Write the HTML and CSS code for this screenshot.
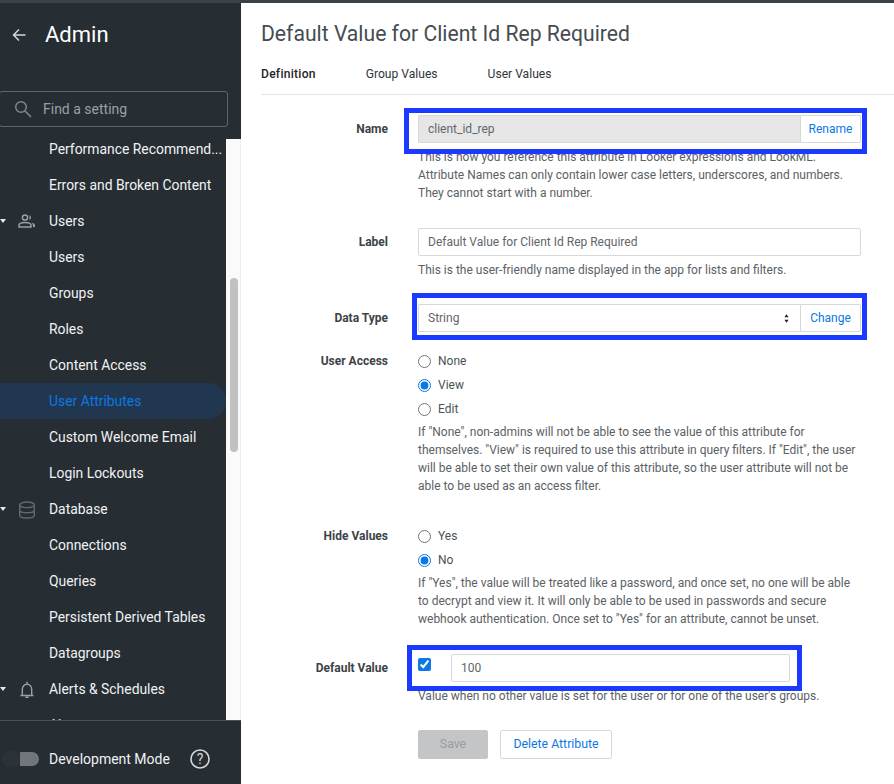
FILE: index.html
```html
<!DOCTYPE html>
<html lang="en">
<head>
<meta charset="utf-8">
<title>Default Value for Client Id Rep Required</title>
<link rel="stylesheet" href="styles.css">
</head>
<body>
<div class="topline"></div>
<div class="app">
  <aside class="sidebar">
    <header class="side-head">
      <svg class="back" viewBox="0 0 16 16" width="16" height="16"><path d="M14.5 8H2.5M8 2.5 2.5 8 8 13.5" fill="none" stroke="#d6d8da" stroke-width="1.5"/></svg>
      <span class="side-title">Admin</span>
    </header>
    <div class="search">
      <svg viewBox="0 0 18 18" width="18" height="18"><circle cx="7" cy="7" r="5.3" fill="none" stroke="#80868b" stroke-width="1.5"/><path d="M11 11l6 6" stroke="#80868b" stroke-width="1.6"/></svg>
      <span>Find a setting</span>
    </div>
    <div class="side-body">
      <nav class="nav">
        <div class="nav-list">
          <a class="item">Performance Recommend...</a>
          <a class="item">Errors and Broken Content</a>
          <a class="item group"><i class="caret"></i>
            <svg class="gicon" viewBox="0 0 18 16" width="18" height="16"><circle cx="7" cy="4.5" r="2.6" fill="none" stroke="#9aa0a6" stroke-width="1.5"/><path d="M1 14v-1.5C1 10.5 4 9.500 7 9.500s6 1 6 3V14z" fill="none" stroke="#9aa0a6" stroke-width="1.5"/><path d="M11.500 1.900a3 3 0 0 1 0 5.200zM14 9.800c2 .5 3 1.500 3 2.700V14h-2c0-1.700-.3-3-1-4.200z" fill="#9aa0a6"/></svg>
            Users</a>
          <a class="item">Users</a>
          <a class="item">Groups</a>
          <a class="item">Roles</a>
          <a class="item">Content Access</a>
          <a class="item active">User Attributes</a>
          <a class="item">Custom Welcome Email</a>
          <a class="item">Login Lockouts</a>
          <a class="item group"><i class="caret"></i>
            <svg class="gicon" viewBox="0 0 18 18" width="18" height="18"><g fill="none" stroke="#5f6b73" stroke-width="1.400"><ellipse cx="9" cy="3.800" rx="7.300" ry="2.800"/><path d="M1.700 3.800v10.400c0 1.600 3.300 2.800 7.300 2.800s7.300-1.200 7.300-2.800V3.800M1.700 9c0 1.600 3.300 2.800 7.300 2.800s7.300-1.200 7.300-2.800"/></g></svg>
            Database</a>
          <a class="item">Connections</a>
          <a class="item">Queries</a>
          <a class="item">Persistent Derived Tables</a>
          <a class="item">Datagroups</a>
          <a class="item group"><i class="caret"></i>
            <svg class="gicon" viewBox="0 0 18 18" width="18" height="18"><path d="M2.500 14.500h13M4.300 14.500V8.500C4.300 5.600 6.200 3.300 9 3.300s4.700 2.300 4.700 5.200v6" fill="none" stroke="#9aa0a6" stroke-width="1.400"/><path d="M9 .8v2M7.300 16.300h3.400" stroke="#9aa0a6" stroke-width="1.500"/></svg>
            Alerts &amp; Schedules</a>
          <a class="item">Alerts</a>
        </div>
      </nav>
      <div class="track"><div class="thumb"></div></div>
    </div>
    <footer class="side-foot">
      <span class="toggle"><i class="knob"></i><i class="rail"></i></span>
      <span class="dev">Development Mode</span>
      <svg class="help" viewBox="0 0 20 20" width="20" height="20"><circle cx="10" cy="10" r="9" fill="none" stroke="#d6d8da" stroke-width="1.600"/><text x="10" y="14.600" text-anchor="middle" class="help-q">?</text></svg>
    </footer>
  </aside>

  <main class="main">
    <h1 class="title">Default Value for Client Id Rep Required</h1>
    <div class="tabs">
      <span class="tab current">Definition</span>
      <span class="tab">Group Values</span>
      <span class="tab">User Values</span>
    </div>
    <form class="form">
      <div class="row row-name">
        <label class="lbl lbl-input">Name</label>
        <div class="field">
          <div class="joined">
            <input class="ctl ctl-disabled" value="client_id_rep" readonly>
            <button type="button" class="addon addon-rename">Rename</button>
          </div>
          <p class="help-text help-name">This is how you reference this attribute in Looker expressions and LookML.<br>Attribute Names can only contain lower case letters, underscores, and numbers.<br>They cannot start with a number.</p>
          <span class="mark mark-name"></span>
        </div>
      </div>
      <div class="row row-label">
        <label class="lbl lbl-input">Label</label>
        <div class="field">
          <input class="ctl ctl-full" value="Default Value for Client Id Rep Required" readonly>
          <p class="help-text">This is the user-friendly name displayed in the app for lists and filters.</p>
        </div>
      </div>
      <div class="row row-type">
        <label class="lbl lbl-input">Data Type</label>
        <div class="field">
          <div class="joined">
            <div class="ctl ctl-select">String
              <svg class="updown" viewBox="0 0 6 10" width="5" height="9"><path d="M3 0 5.500 3.600H.5zM3 10 .5 6.400h5z" fill="#222"/></svg>
            </div>
            <button type="button" class="addon addon-change">Change</button>
          </div>
          <span class="mark mark-type"></span>
        </div>
      </div>
      <div class="row row-access">
        <label class="lbl">User Access</label>
        <div class="field field-opts">
          <label class="opt"><input type="radio" name="access"><span>None</span></label>
          <label class="opt"><input type="radio" name="access" checked><span>View</span></label>
          <label class="opt"><input type="radio" name="access"><span>Edit</span></label>
          <p class="help-text help-opts">If "None", non-admins will not be able to see the value of this attribute for<br>themselves. "View" is required to use this attribute in query filters. If "Edit", the user<br>will be able to set their own value of this attribute, so the user attribute will not be<br>able to be used as an access filter.</p>
        </div>
      </div>
      <div class="row row-hide">
        <label class="lbl">Hide Values</label>
        <div class="field field-opts">
          <label class="opt"><input type="radio" name="hide"><span>Yes</span></label>
          <label class="opt"><input type="radio" name="hide" checked><span>No</span></label>
          <p class="help-text help-hide">If "Yes", the value will be treated like a password, and once set, no one will be able<br>to decrypt and view it. It will only be able to be used in passwords and secure<br>webhook authentication. Once set to "Yes" for an attribute, cannot be unset.</p>
        </div>
      </div>
      <div class="row row-default">
        <label class="lbl lbl-input">Default Value</label>
        <div class="field">
          <div class="default-line">
            <input class="check" type="checkbox" checked>
            <input class="ctl ctl-value" value="100" readonly>
          </div>
          <p class="help-text">Value when no other value is set for the user or for one of the user's groups.</p>
          <span class="mark mark-default"></span>
        </div>
      </div>
      <div class="row row-actions">
        <span></span>
        <div class="actions">
          <button type="button" class="btn btn-save">Save</button>
          <button type="button" class="btn btn-delete">Delete Attribute</button>
        </div>
      </div>
    </form>
  </main>
</div>
</body>
</html>
```

FILE: styles.css
```css
* { box-sizing: border-box; }
html, body { margin: 0; height: 784px; overflow: hidden; background: #fff; }
body { font-family: Roboto, "Liberation Sans", sans-serif; font-size: 12px; color: #3c4348; }
.topline { height: 3px; background: #3b4248; }
.app { display: flex; height: 781px; }

/* sidebar */
.sidebar { width: 241px; flex: none; background: #262d33; display: flex; flex-direction: column; color: #f1f2f3; }
.side-head { height: 88px; flex: none; display: flex; align-items: flex-start; padding: 22px 0 0 11px; }
.back { margin-top: 2px; }
.side-title { margin-left: 18px; font-size: 22px; line-height: 19px; color: #fff; }
.search { flex: none; height: 36px; width: 229px; margin-left: -1px; display: flex; align-items: center; gap: 11px; padding-left: 14px; border: 1px solid #5f666b; border-radius: 3px; color: #9aa0a6; font-size: 14px; }
.side-body { flex: 1; min-height: 0; display: flex; margin-top: 12px; }
.nav { width: 226px; flex: none; overflow: hidden; }
.nav-list { margin-top: -8px; }
.item { display: flex; align-items: center; height: 36px; padding-left: 49px; font-size: 13.900px; color: #f1f2f3; white-space: nowrap; position: relative; }
.item.active { background: #21374f; color: #0b78e3; border-radius: 0 18px 18px 0; }
.caret { position: absolute; left: 0; top: 16px; border-style: solid; border-width: 4px 3.500px 0; border-color: #e8eaed transparent transparent; }
.gicon { position: absolute; left: 18px; top: 10px; }
.track { width: 15px; flex: none; background: #fafafa; border-right: 1px solid #ececec; padding: 139px 3px 0 4px; overflow: hidden; }
.thumb { height: 174px; width: 8px; border-radius: 4px; background: #c1c1c1; }
.side-foot { flex: none; height: 64px; border-top: 1px solid #4b5257; display: flex; align-items: center; padding-top: 13px; padding-left: 2px; }
.toggle { display: flex; align-items: center; width: 47px; flex: none; }
.knob { width: 18px; height: 18px; border-radius: 50%; background: #2b3238; }
.rail { width: 19px; height: 14px; border-radius: 0 7px 7px 0; background: #70767b; }
.dev { font-size: 14px; width: 141px; flex: none; }
.help { flex: none; }
.help-q { font: 14px Roboto, sans-serif; fill: #d6d8da; }

/* main */
.main { flex: 1; min-width: 0; padding: 18px 0 0 20px; }
.title { margin: 0; font-weight: 400; font-size: 21.150px; line-height: 25px; color: #454c51; }
.tabs { display: flex; gap: 50px; margin-top: 20px; height: 29px; line-height: 16px; border-bottom: 1px solid #e4e5e6; }
.tab { color: #2f363b; font-size: 12.100px; }
.tab.current { font-weight: 500; color: #1f2529; letter-spacing: .25px; }
.form { padding-top: 20px; }
.row { display: grid; grid-template-columns: 127px 443px; column-gap: 30px; }
.lbl { text-align: right; font-weight: 700; color: #3c4348; line-height: 18px; }
.lbl-input { line-height: 28px; }
.field { position: relative; }
.field-opts { margin-top: -3px; }
.row-label { margin-top: 26px; }
.row-type { margin-top: 25px; }
.row-access { margin-top: 20px; }
.row-hide { margin-top: 32px; }
.row-default { margin-top: 26px; }
.row-actions { margin-top: 25px; }
.joined { display: flex; height: 28px; }
.ctl { height: 28px; border: 1px solid #d6d8da; border-radius: 2px; padding: 0 9px; font: 12px Roboto, sans-serif; color: #5f666b; background: #fff; outline: none; }
.ctl-disabled { flex: 1; min-width: 0; background: #e6e6e6; color: #60666b; border-radius: 2px 0 0 2px; border-right: 0; }
.ctl-full { width: 100%; }
.ctl-select { flex: 1; display: flex; align-items: center; justify-content: space-between; border-right: 0; border-radius: 2px 0 0 2px; padding-right: 11px; }
.updown { display: block; }
.addon { flex: none; height: 28px; width: 61px; padding: 0; background: #fff; border: 1px solid #d6d8da; border-radius: 0 2px 2px 0; font: 12px Roboto, sans-serif; color: #0b78e3; }
.help-text { margin: 5px 0 0; line-height: 18px; color: #5a6166; white-space: nowrap; }
.help-opts { margin-top: 1.500px; }
.help-hide { margin-top: 2px; }
.opt { display: flex; align-items: center; height: 24px; color: #4a5156; }
.opt input { width: 13px; height: 13px; margin: 1px 7px 0 0; accent-color: #0b78e3; }
.default-line { display: flex; align-items: flex-start; height: 28px; }
.check { width: 13px; height: 13px; margin: 4px 20px 0 0; accent-color: #0b78e3; flex: none; }
.ctl-value { width: 339px; }
.actions { display: flex; gap: 12px; }
.btn { height: 29px; border-radius: 2px; font: 12.300px Roboto, sans-serif; padding: 0; }
.btn-save { width: 70px; background: #c4c5c6; border: 1px solid #c4c5c6; color: #9a9c9e; }
.btn-delete { width: 112px; background: #fff; border: 1px solid #d6d8da; color: #0b78e3; }

/* blue annotation frames drawn over the form */
.mark { position: absolute; border: 5px solid #1c39ff; pointer-events: none; }
.mark-name { left: -14px; top: -7px; width: 463px; height: 46px; }
.mark-type { left: -6px; top: -11px; width: 455px; height: 47px; }
.mark-default { left: -11px; top: -9px; width: 395px; height: 46px; }
```
